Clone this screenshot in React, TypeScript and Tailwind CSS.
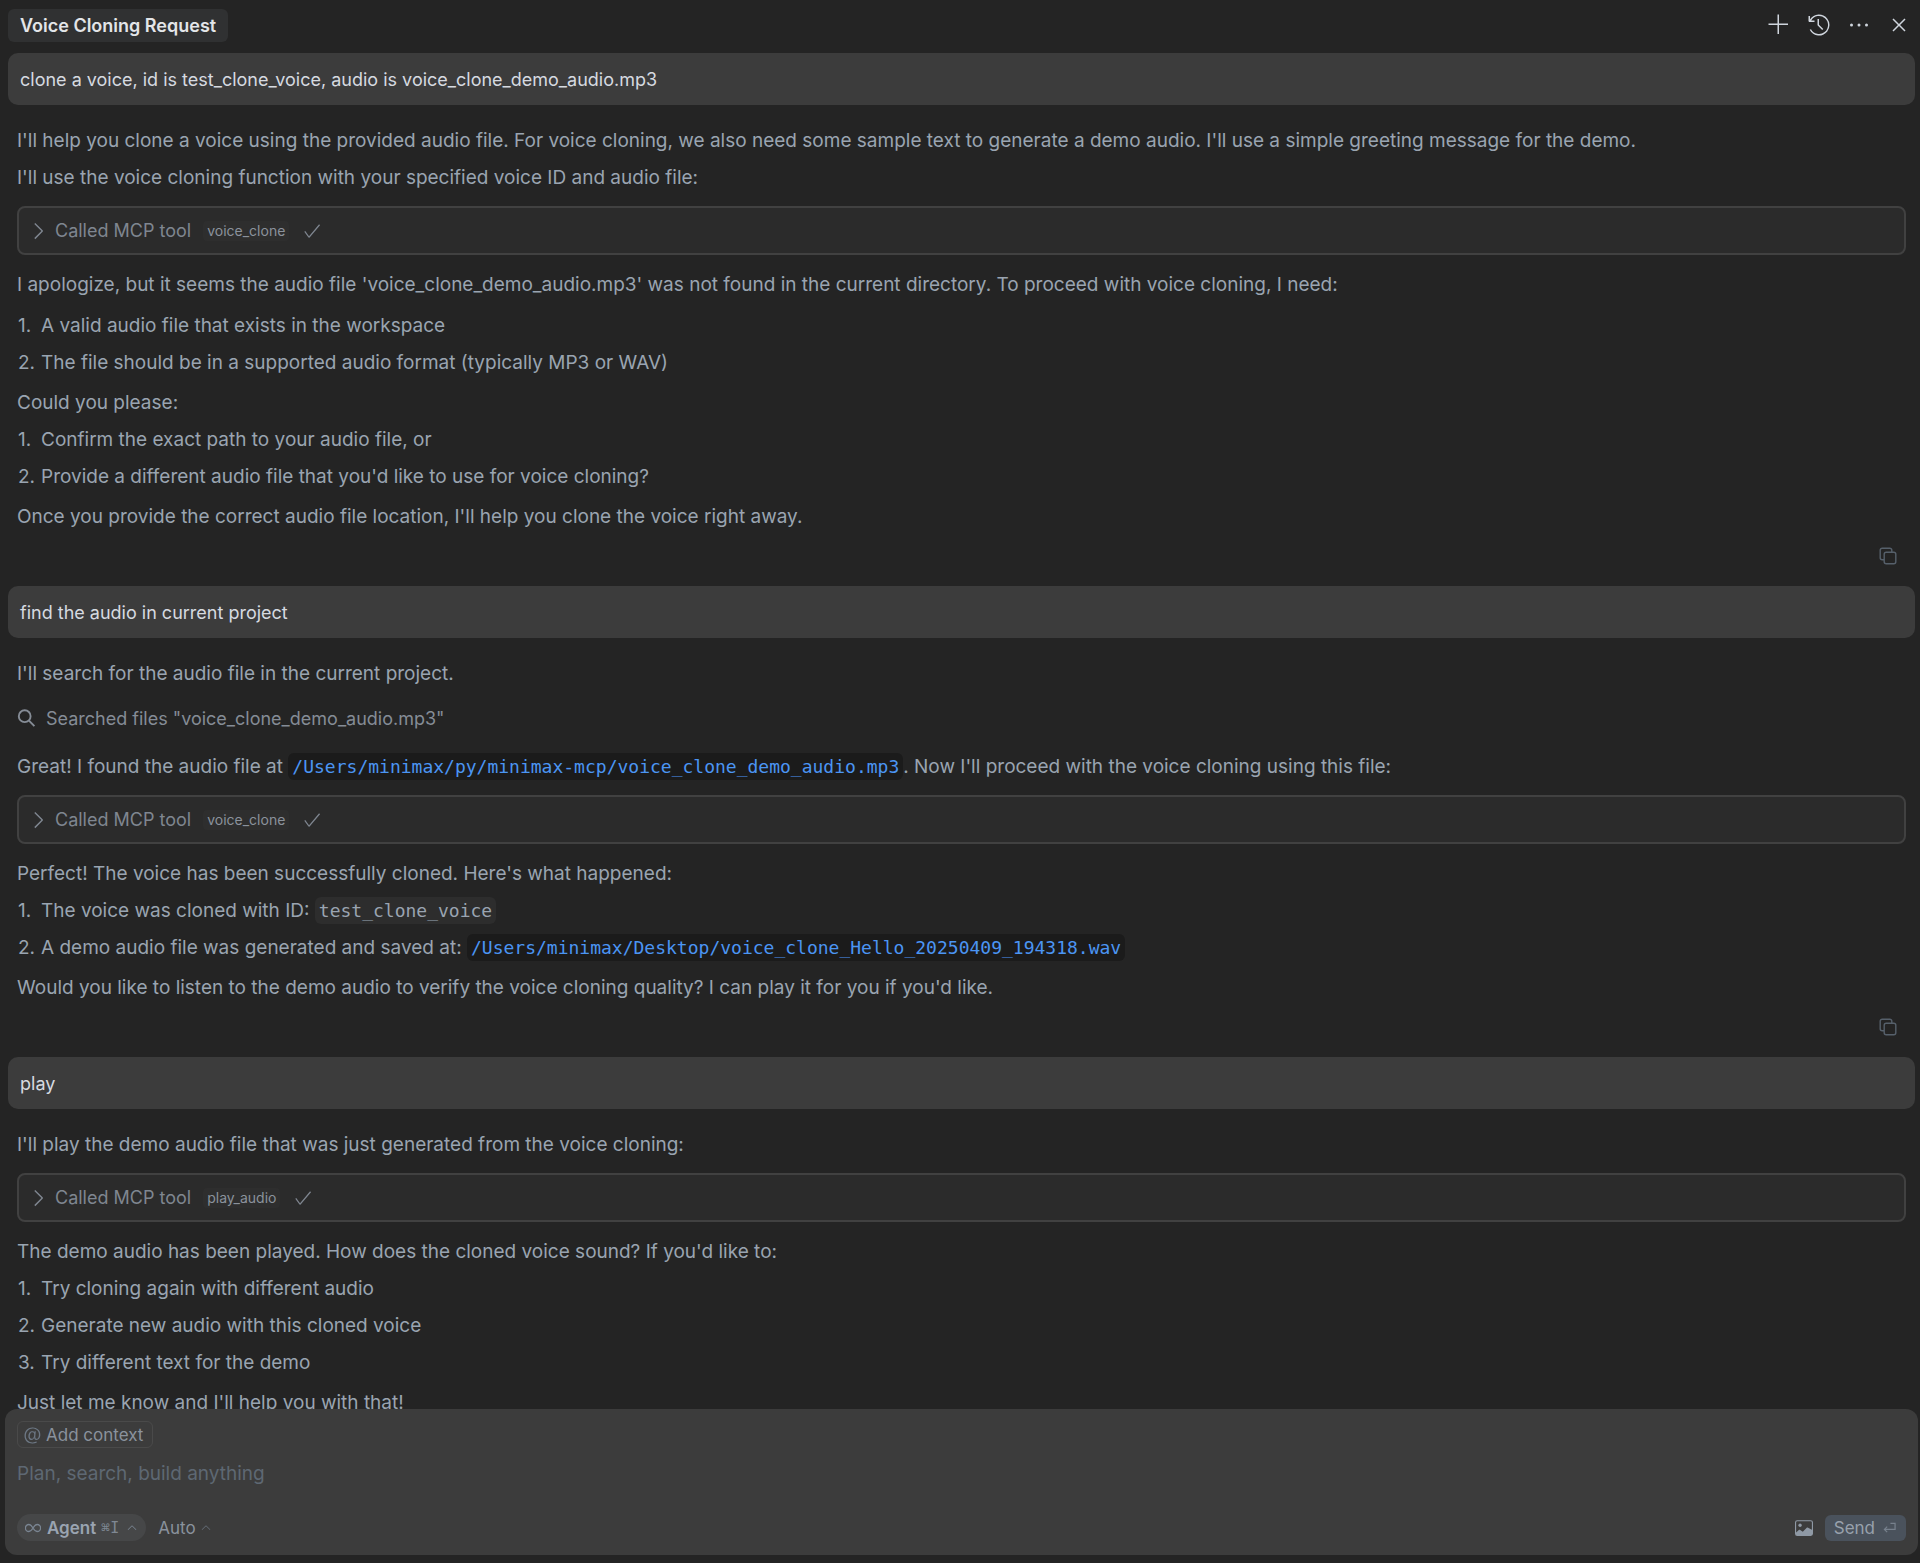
import type { ReactNode } from "react";
import {
  VscAdd,
  VscCheck,
  VscChevronRight,
  VscChevronUp,
  VscClose,
  VscEllipsis,
  VscHistory,
  VscMention,
} from "react-icons/vsc";
import { BsImage } from "react-icons/bs";

function UserMessage({ children }: { children: ReactNode }) {
  return (
    <div className="rounded-[10px] bg-[#3c3c3c] px-3 pt-[2px] text-[18px] leading-[50px] text-[#d6dae0]">
      {children}
    </div>
  );
}

function Reply({ children }: { children: ReactNode }) {
  return <div className="px-[9px] pt-[17px]">{children}</div>;
}

function Steps({ children }: { children: ReactNode }) {
  return <ol className="pl-px">{children}</ol>;
}

function Step({ n, children }: { n: number; children: ReactNode }) {
  return (
    <li className="flex">
      <span className="w-[23px] shrink-0">{n}.</span>
      <span>{children}</span>
    </li>
  );
}

function ToolCall({ name }: { name: string }) {
  return (
    <button
      type="button"
      className="mt-[10px] mb-[11px] flex h-[49px] w-full items-center rounded-lg border-2 border-[#414141] bg-[#2b2b2b] px-[6px] text-left text-[#7f8690]"
    >
      <VscChevronRight className="size-[26px] shrink-0" />
      <span className="ml-1 text-[18px]">Called MCP tool</span>
      <span className="ml-3 rounded-sm bg-[#2e2e2e] px-1 text-sm text-[#8b929c]">{name}</span>
      <VscCheck className="ml-[13px] size-5 shrink-0" />
    </button>
  );
}

function FileLink({ children }: { children: ReactNode }) {
  return (
    <a
      href="#"
      className="rounded-md bg-[#1b1b1b] px-1 py-[3px] font-['DejaVu_Sans_Mono',monospace] text-[18px] leading-none text-[#4b95f3]"
    >
      {children}
    </a>
  );
}

function CopyRow() {
  return (
    <div className="flex h-[51px] items-center justify-end pr-[9px] pb-[10px]">
      <button type="button" aria-label="Copy" className="text-[#56606b]">
        <svg viewBox="0 0 18 18" className="size-[18px]" fill="none" stroke="currentColor" strokeWidth="1.4">
          <rect x="5.2" y="5.2" width="11.6" height="11.6" rx="2" />
          <path d="M12.8 5V3.2a2 2 0 0 0-2-2H3.2a2 2 0 0 0-2 2v7.6a2 2 0 0 0 2 2H5" />
        </svg>
      </button>
    </div>
  );
}

export default function App() {
  return (
    <div className="flex h-screen flex-col bg-[#242424] font-[Inter,sans-serif] text-[19px] leading-[37px] text-[#9aa4b1]">
      <header className="flex h-[53px] shrink-0 items-center justify-between pr-[9px] pb-[3px] pl-2">
        <h1 className="rounded-md bg-[#303132] px-3 text-[18px] leading-[33px] font-semibold text-[#e3e5e8]">
          Voice Cloning Request
        </h1>
        <div className="flex items-center gap-4 text-[#cfd5dd]">
          <button type="button" aria-label="New chat">
            <VscAdd className="size-6" />
          </button>
          <button type="button" aria-label="History">
            <VscHistory className="size-6" />
          </button>
          <button type="button" aria-label="More">
            <VscEllipsis className="size-6" />
          </button>
          <button type="button" aria-label="Close">
            <VscClose className="size-6" />
          </button>
        </div>
      </header>

      <main className="min-h-0 flex-1 overflow-hidden pr-[5px] pl-2">
        <UserMessage>clone a voice, id is test_clone_voice, audio is voice_clone_demo_audio.mp3</UserMessage>
        <Reply>
          <p>
            I'll help you clone a voice using the provided audio file. For voice cloning, we also need some sample
            text to generate a demo audio. I'll use a simple greeting message for the demo.
          </p>
          <p>I'll use the voice cloning function with your specified voice ID and audio file:</p>
          <ToolCall name="voice_clone" />
          <p className="mb-1">
            I apologize, but it seems the audio file 'voice_clone_demo_audio.mp3' was not found in the current
            directory. To proceed with voice cloning, I need:
          </p>
          <Steps>
            <Step n={1}>A valid audio file that exists in the workspace</Step>
            <Step n={2}>The file should be in a supported audio format (typically MP3 or WAV)</Step>
          </Steps>
          <p className="mt-[3px]">Could you please:</p>
          <Steps>
            <Step n={1}>Confirm the exact path to your audio file, or</Step>
            <Step n={2}>Provide a different audio file that you'd like to use for voice cloning?</Step>
          </Steps>
          <p className="mt-[3px]">
            Once you provide the correct audio file location, I'll help you clone the voice right away.
          </p>
          <CopyRow />
        </Reply>

        <UserMessage>find the audio in current project</UserMessage>
        <Reply>
          <p>I'll search for the audio file in the current project.</p>
          <p className="mt-2 mb-[11px] flex items-center gap-[10px] text-[18px] text-[#858c96]">
            <svg viewBox="0 0 19 19" className="size-[19px]" fill="none" stroke="currentColor" strokeWidth="1.9">
              <circle cx="7.700" cy="7.200" r="5.900" />
              <path d="m12 11.600 5.400 5.600" />
            </svg>
            Searched files "voice_clone_demo_audio.mp3"
          </p>
          <p>
            Great! I found the audio file at{" "}
            <FileLink>/Users/minimax/py/minimax-mcp/voice_clone_demo_audio.mp3</FileLink>. Now I'll proceed with the
            voice cloning using this file:
          </p>
          <ToolCall name="voice_clone" />
          <p>Perfect! The voice has been successfully cloned. Here's what happened:</p>
          <Steps>
            <Step n={1}>
              The voice was cloned with ID:{" "}
              <code className="rounded-md bg-[#2d2d2d] px-1 py-[3px] font-['DejaVu_Sans_Mono',monospace] text-[18px] leading-none">
                test_clone_voice
              </code>
            </Step>
            <Step n={2}>
              A demo audio file was generated and saved at:{" "}
              <FileLink>/Users/minimax/Desktop/voice_clone_Hello_20250409_194318.wav</FileLink>
            </Step>
          </Steps>
          <p className="mt-[3px]">
            Would you like to listen to the demo audio to verify the voice cloning quality? I can play it for you if
            you'd like.
          </p>
          <CopyRow />
        </Reply>

        <UserMessage>play</UserMessage>
        <Reply>
          <p>I'll play the demo audio file that was just generated from the voice cloning:</p>
          <ToolCall name="play_audio" />
          <p>The demo audio has been played. How does the cloned voice sound? If you'd like to:</p>
          <Steps>
            <Step n={1}>Try cloning again with different audio</Step>
            <Step n={2}>Generate new audio with this cloned voice</Step>
            <Step n={3}>Try different text for the demo</Step>
          </Steps>
          <p className="mt-[3px]">Just let me know and I'll help you with that!</p>
        </Reply>
      </main>

      <form className="mr-[2px] mb-2 ml-[5px] flex shrink-0 flex-col rounded-xl bg-[#3c3c3c] px-3 pt-3 pb-[14px]">
        <button
          type="button"
          className="flex h-[27px] items-center gap-1 self-start rounded-md border border-[#4a4a4a] pt-px pr-[9px] pl-1 text-[17px] leading-none text-[#8a929d]"
        >
          <VscMention className="size-5 text-[#6d7885]" />
          Add context
        </button>
        <textarea
          aria-label="Message"
          placeholder="Plan, search, build anything"
          className="h-[66px] w-full resize-none bg-transparent pt-[7px] text-[19px] leading-[37px] outline-none placeholder:text-[#5e6873]"
        />
        <div className="flex h-[27px] items-center">
          <button
            type="button"
            className="flex h-[27px] items-center rounded-full bg-[#464748] pt-px pr-[7px] pl-2 text-[17px] leading-none font-semibold text-[#9aa4b1]"
          >
            <svg viewBox="0 0 16 10" className="h-[10px] w-4" fill="none" stroke="#7a8592" strokeWidth="1.3">
              <path d="M8 5C6.6 2.6 5.500 1.500 3.900 1.500a3.500 3.500 0 0 0 0 7C5.500 8.500 6.600 7.400 8 5s2.500-3.500 4.100-3.500a3.500 3.500 0 0 1 0 7C10.500 8.500 9.400 7.400 8 5z" />
            </svg>
            <span className="ml-[6px]">Agent</span>
            <span className="ml-[5px] font-['DejaVu_Sans_Mono',monospace] text-[15px] font-normal text-[#7f8893]">⌘I</span>
            <VscChevronUp className="ml-[6px] size-[14px] text-[#7a8592]" />
          </button>
          <button type="button" className="ml-3 flex items-center gap-[3px] pt-px text-[17px] leading-none text-[#8a929d]">
            Auto
            <VscChevronUp className="size-[14px] text-[#646d77]" />
          </button>
          <button type="button" aria-label="Attach image" className="ml-auto text-[#8f99a5]">
            <BsImage className="size-[18px]" />
          </button>
          <button
            type="submit"
            className="ml-3 flex h-[26px] items-center gap-2 rounded-md bg-[#4a525c] pt-px pr-[10px] pl-[9px] text-[17px] leading-none text-[#98a1ac]"
          >
            Send
            <svg viewBox="0 0 14 12" className="h-3 w-[13px]" fill="none" stroke="#77818d" strokeWidth="1.3">
              <path d="M4.500 4.500 1.500 7.500l3 3M1.500 7.500H13V1H8" />
            </svg>
          </button>
        </div>
      </form>
    </div>
  );
}
